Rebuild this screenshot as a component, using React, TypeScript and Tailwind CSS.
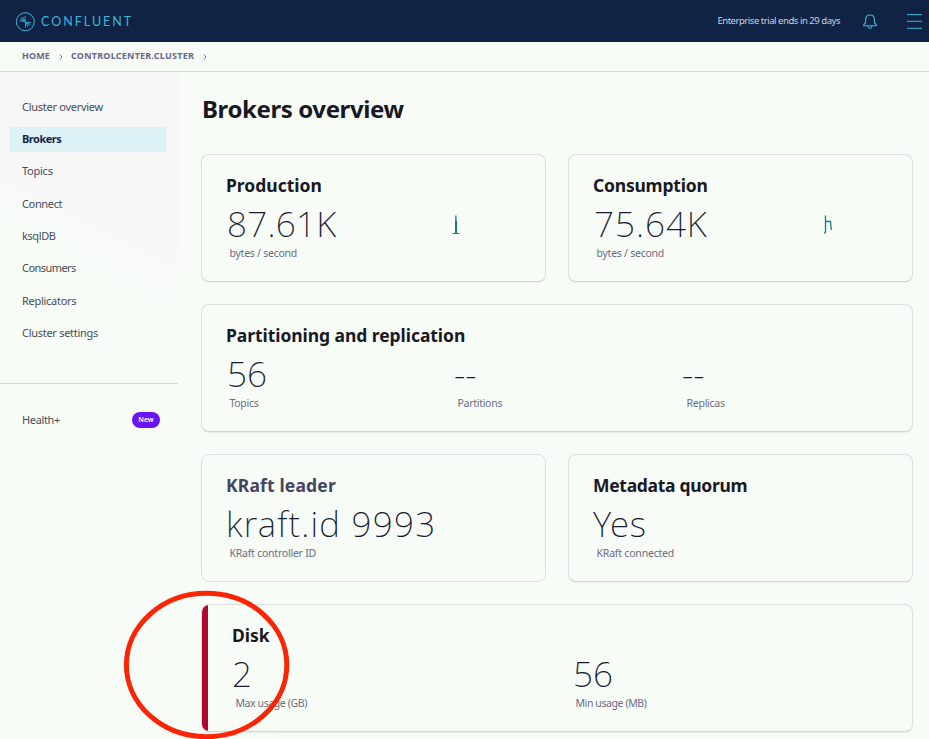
import type { ReactNode } from "react";
import clsx from "clsx";

const navItems = [
  { label: "Cluster overview", track: "tracking-[-0.27px]" },
  { label: "Brokers", track: "tracking-[-0.48px]", active: true },
  { label: "Topics", track: "tracking-[-0.25px]" },
  { label: "Connect", track: "tracking-[-0.35px]" },
  { label: "ksqlDB", track: "tracking-[-0.4px]" },
  { label: "Consumers", track: "tracking-[-0.55px]" },
  { label: "Replicators", track: "tracking-[-0.28px]" },
  { label: "Cluster settings", track: "tracking-[-0.28px]" },
];

function Logo() {
  return (
    <svg width="20" height="20" viewBox="0 0 20 20" fill="none" stroke="#38b6dd" strokeWidth="1" className="-ml-px mt-px shrink-0">
      <circle cx="10.3" cy="9.7" r="9" />
      <path d="M4.5 9.2H10M6 5.7L10 9.6M10 4V9.5M7.8 4.9L10 9.6M5 7.2L10 9.4" strokeWidth="0.8" />
      <path d="M16 10.4H10.5M14.6 13.9L10.5 10.2M10.5 15.5V10M12.7 14.9L10.5 10M15.5 12.4L10.5 10.2" strokeWidth="0.8" />
    </svg>
  );
}

function Header() {
  return (
    <header className="flex h-[42px] items-center bg-[#112344] pl-4">
      <Logo />
      <span className="ml-1.5 mt-[3px] font-[Lato] text-[12.5px] leading-none tracking-[2px] text-[#38b6dd]">CONFLUENT</span>
      <span className="ml-auto text-[9.5px] leading-none tracking-[-0.46px] text-[#c9d3df]">Enterprise trial ends in 29 days</span>
      <svg width="14" height="16" viewBox="0 0 14 16" fill="none" stroke="#38b6dd" strokeWidth="1.1" className="ml-[23px] mt-0.5">
        <path d="M.8 11.8V10.5L2.6 9V5.2C2.6 2.7 4.4 1 7 1S11.4 2.7 11.4 5.2V9L13.2 10.5V11.8ZM5 12.2C5.2 15 8.8 15 9 12.2" />
      </svg>
      <svg width="15" height="16" viewBox="0 0 15 16" stroke="#38b6dd" strokeWidth="1" className="ml-[30px] mr-[7px] mt-0.5">
        <path d="M0 .6H15M0 7.3H15M0 14.3H15" />
      </svg>
    </header>
  );
}

function Chevron() {
  return (
    <svg width="4" height="6" viewBox="0 0 4 6" fill="none" stroke="#77768f" className="mt-0.5">
      <path d="M.8 .5L3 3L.8 5.5" />
    </svg>
  );
}

function Breadcrumbs() {
  return (
    <nav className="flex h-[30px] items-center border-b border-[#d6dcd8] pb-0.5 pl-[22px] text-[9px] font-bold leading-none text-[#67668a]">
      <span className="w-[28px] whitespace-nowrap tracking-[0.1px]">HOME</span>
      <span className="ml-[9px] mr-2"><Chevron /></span>
      <span className="w-[124px] whitespace-nowrap tracking-[0.24px]">CONTROLCENTER.CLUSTER</span>
      <span className="ml-2"><Chevron /></span>
    </nav>
  );
}

function Sidebar() {
  return (
    <aside className="w-[178px] shrink-0">
      <div className="h-[312px] border-b border-[#d3d9d5] bg-[linear-gradient(207deg,#f7f7f7_0%,#f7f7f7_42%,#f7fcf7_58%)] pl-[10px] pt-[19px]">
        {navItems.map((item) => (
          <div key={item.label} className="flex h-[32.3px] items-center">
            <a
              className={clsx(
                "flex h-[25px] w-[156px] items-center pl-3 text-[11px]",
                item.track,
                item.active ? "bg-[#dcf2f6] font-bold text-[#16264a]" : "text-[#494c58]",
              )}
            >
              {item.label}
            </a>
          </div>
        ))}
      </div>
      <div className="flex items-center justify-between pl-[22px] pr-[18px] pt-7 text-[11px] leading-4 text-[#494c58]">
        <span className="tracking-[-0.35px]">Health+</span>
        <span className="flex h-4 w-7 items-center justify-center rounded-full bg-[#6b13f2] text-[7px] font-semibold text-white">New</span>
      </div>
    </aside>
  );
}

function Card({ title, titleClass, wide, flat, alert, children }: {
  title: string;
  titleClass?: string;
  wide?: boolean;
  flat?: boolean;
  alert?: boolean;
  children: ReactNode;
}) {
  return (
    <section
      className={clsx(
        "h-32 overflow-hidden rounded-lg border pt-[18px]",
        wide && "col-span-2",
        flat ? "border-[#dcdfea]" : "border-[#dbe0dd] border-b-[#d0d5d2] shadow-[0_1px_1px_rgba(0,0,0,0.06)]",
        alert ? "relative pl-[30px]" : "pl-6",
      )}
    >
      {alert && <span className="absolute inset-y-0 left-0 w-1.5 bg-[#b00730]" />}
      <h2 className={clsx("text-[17.5px] font-bold leading-6", flat ? "text-[#45445f]" : "text-[#191924]", titleClass)}>{title}</h2>
      <div className="flex">{children}</div>
    </section>
  );
}

function Metric({ value, label, width, valueClass, labelClass }: {
  value: string;
  label: string;
  width?: string;
  valueClass?: string;
  labelClass?: string;
}) {
  return (
    <div className={clsx("whitespace-nowrap", width)}>
      <div className={clsx("mt-[6px] h-[42px] text-[35px] font-extralight leading-[42px] text-[#171a30]", valueClass)}>{value}</div>
      <div className={clsx("pl-[3.5px] text-[10.5px] leading-4 text-[#6b6c83]", labelClass)}>{label}</div>
    </div>
  );
}

export default function App() {
  return (
    <div className="relative h-[739px] w-[929px] overflow-hidden bg-[#f7fcf7] font-['Noto_Sans',sans-serif]">
      <Header />
      <Breadcrumbs />
      <div className="flex">
        <Sidebar />
        <main className="pl-[23px]">
          <h1 className="h-[82px] pl-px pt-[21px] text-[24px] font-bold leading-8 tracking-[-0.4px] text-[#191924]">Brokers overview</h1>
          <div className="grid grid-cols-[345px_345px] gap-[22px]">
            <Card title="Production">
              <Metric value="87.61K" label="bytes / second" width="w-[225px]" valueClass="pl-px tracking-[0.3px]" labelClass="tracking-[-0.25px]" />
              <svg width="10" height="22" viewBox="0 0 10 22" fill="none" stroke="#117e83" className="mt-[17px]">
                <path d="M1.5 19.5H8.5" />
                <path d="M4.9 19V1.5" strokeWidth="1.3" />
                <path d="M5 19V7" strokeWidth="2" />
              </svg>
            </Card>
            <Card title="Consumption" titleClass="tracking-[-0.22px]">
              <Metric value="75.64K" label="bytes / second" width="w-[230px]" valueClass="pl-px tracking-[1px]" labelClass="tracking-[-0.25px]" />
              <svg width="10" height="22" viewBox="0 0 10 22" fill="none" stroke="#117e83" strokeWidth="1.3" className="mt-[17px]">
                <path d="M1.4 19.5L2.5 18V1.5V7.5H7.5L8.3 16" />
              </svg>
            </Card>
            <Card title="Partitioning and replication" titleClass="tracking-[-0.06px]" wide>
              <Metric value="56" label="Topics" width="w-[229px]" valueClass="pl-px" labelClass="tracking-[-0.3px]" />
              <Metric value="--" label="Partitions" width="w-[228px]" valueClass="-ml-px -mr-px" labelClass="-ml-px tracking-[-0.28px]" />
              <Metric value="--" label="Replicas" valueClass="-ml-px" labelClass="tracking-[-0.25px]" />
            </Card>
            <Card title="KRaft leader" titleClass="tracking-[0.16px]" flat>
              <Metric value="kraft.id 9993" label="KRaft controller ID" valueClass="tracking-[1.25px] [font-variant-ligatures:none]" labelClass="tracking-[-0.23px]" />
            </Card>
            <Card title="Metadata quorum" titleClass="tracking-[-0.3px]">
              <Metric value="Yes" label="KRaft connected" valueClass="tracking-[0.7px]" labelClass="tracking-[-0.2px]" />
            </Card>
            <Card title="Disk" wide alert>
              <Metric value="2" label="Max usage (GB)" width="w-[340px]" labelClass="tracking-[-0.4px]" />
              <Metric value="56" label="Min usage (MB)" valueClass="pl-px" labelClass="tracking-[-0.4px]" />
            </Card>
          </div>
        </main>
      </div>
      <svg className="pointer-events-none absolute left-[120px] top-[588px]" width="174" height="151" fill="none" stroke="#fb2506" strokeWidth="5">
        <ellipse cx="86.6" cy="77" rx="80.2" ry="71.7" />
      </svg>
    </div>
  );
}
